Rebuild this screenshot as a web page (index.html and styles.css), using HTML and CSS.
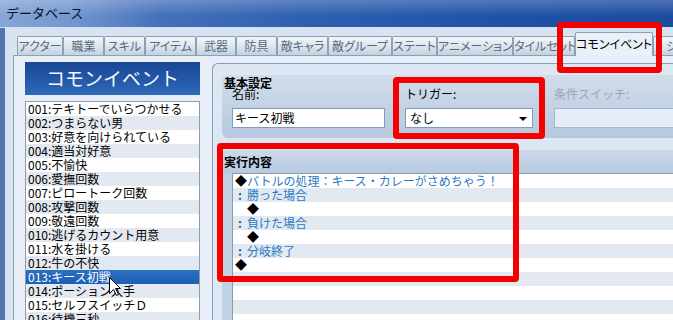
FILE: index.html
```html
<!DOCTYPE html>
<html lang="ja">
<head>
<meta charset="utf-8">
<title>データベース</title>
<link rel="stylesheet" href="styles.css">
</head>
<body>
<div class="window">
  <div class="titlebar"><span class="title">データベース</span></div>
  <div class="frame">
    <div class="tabs">
      <div class="tab">アクター</div>
      <div class="tab">職業</div>
      <div class="tab">スキル</div>
      <div class="tab">アイテム</div>
      <div class="tab">武器</div>
      <div class="tab">防具</div>
      <div class="tab">敵キャラ</div>
      <div class="tab">敵グループ</div>
      <div class="tab">ステート</div>
      <div class="tab">アニメーション</div>
      <div class="tab">タイルセット</div>
      <div class="tab active">コモンイベント</div>
      <div class="tab">システム</div>
    </div>
    <div class="panel">
      <div class="leftcol">
        <div class="lhead">コモンイベント</div>
        <div class="list">
          <div class="row">001:テキトーでいらつかせる</div>
          <div class="row">002:つまらない男</div>
          <div class="row">003:好意を向けられている</div>
          <div class="row">004:適当対好意</div>
          <div class="row">005:不愉快</div>
          <div class="row">006:愛撫回数</div>
          <div class="row">007:ピロートーク回数</div>
          <div class="row">008:攻撃回数</div>
          <div class="row">009:敬遠回数</div>
          <div class="row">010:逃げるカウント用意</div>
          <div class="row">011:水を掛ける</div>
          <div class="row">012:牛の不快</div>
          <div class="row sel">013:キース初戦</div>
          <div class="row">014:ポーション入手</div>
          <div class="row">015:セルフスイッチＤ</div>
          <div class="row">016:待機三秒</div>
        </div>
      </div>
      <div class="rightbox">
        <div class="group basic">
          <div class="gtitle">基本設定</div>
          <div class="fields">
            <div class="field name">
              <div class="flabel">名前:</div>
              <div class="input">キース初戦</div>
            </div>
            <div class="field trig">
              <div class="flabel">トリガー:</div>
              <div class="input combo"><span>なし</span><span class="arrow"></span></div>
            </div>
            <div class="field sw">
              <div class="flabel dim">条件スイッチ:</div>
              <div class="input dis"></div>
            </div>
          </div>
        </div>
        <div class="group exec">
          <div class="ghead">実行内容</div>
          <div class="gbody">
            <div class="exlist">
              <div class="exrow"><span class="dia">◆</span>バトルの処理：キース・カレーがさめちゃう！</div>
              <div class="exrow"><span class="colon">:</span>勝った場合</div>
              <div class="exrow ind"><span class="dia">◆</span></div>
              <div class="exrow"><span class="colon">:</span>負けた場合</div>
              <div class="exrow ind"><span class="dia">◆</span></div>
              <div class="exrow"><span class="colon">:</span>分岐終了</div>
              <div class="exrow"><span class="dia">◆</span></div>
              <div class="exrow"></div>
              <div class="exrow"></div>
              <div class="exrow"></div>
              <div class="exrow"></div>
              <div class="exrow"></div>
            </div>
          </div>
        </div>
      </div>
    </div>
  </div>
</div>

<div class="mark m-tab"></div>
<div class="mark m-trig"></div>
<div class="mark m-exec"></div>

<svg class="cursor" width="13" height="20" viewBox="0 0 13 20" xmlns="http://www.w3.org/2000/svg">
  <path d="M0.5 0.5 L0.5 16.5 L4.5 12.5 L7.5 18.5 L9.5 17.5 L6.5 11.5 L11.5 11.5 Z" fill="#fff" stroke="#000" stroke-width="1" stroke-linejoin="miter"/>
</svg>
</body>
</html>
```

FILE: styles.css
```css
* { box-sizing: border-box; }
html, body { margin: 0; padding: 0; }
body {
  width: 673px;
  height: 320px;
  overflow: hidden;
  position: relative;
  font-family: "Noto Sans CJK JP", "Noto Sans", sans-serif;
  font-size: 12px;
  color: #000;
  background: #d7e3f2;
}

.window {
  width: 673px;
  height: 320px;
  display: flex;
  flex-direction: column;
}

.titlebar {
  height: 28px;
  flex: none;
  display: flex;
  align-items: center;
  padding: 0 0 2px 6px;
  border-bottom: 1px solid #d3e0f1;
  background:
    linear-gradient(180deg, rgba(255,255,255,0.22) 0%, rgba(255,255,255,0.05) 45%, rgba(0,0,0,0) 60%),
    linear-gradient(90deg, #86a6d7 0px, #7597cf 70px, #4571bb 160px, #2f60b0 300px, #2253a7 480px, #1b4a9f 673px);
}
.title {
  font-size: 13px;
  line-height: 14px;
  color: #0a1322;
}

.frame {
  flex: 1;
  min-height: 0;
  display: flex;
  flex-direction: column;
  border-left: 5px solid #5275ad;
  padding-left: 8px;
  background: #d7e3f2;
}

.tabs {
  flex: none;
  height: 22px;
  margin-top: 5px;
  margin-left: 4px;
  display: flex;
  align-items: flex-end;
}
.tab {
  flex: none;
  height: 19px;
  border: 1px solid #8ea0b6;
  border-bottom: none;
  border-radius: 2px 2px 0 0;
  background: linear-gradient(180deg, #f2f6fa 0%, #dbe4ee 55%, #c3d1e1 100%);
  color: #5b6979;
  font-size: 12px;
  line-height: 18px;
  text-align: center;
  white-space: nowrap;
  overflow: hidden;
  font-feature-settings: "palt";
}
.tab:nth-child(1) { width: 46px; }
.tab:nth-child(2) { width: 41px; }
.tab:nth-child(3) { width: 41px; }
.tab:nth-child(4) { width: 51px; }
.tab:nth-child(5) { width: 40px; }
.tab:nth-child(6) { width: 41px; }
.tab:nth-child(7) { width: 51px; }
.tab:nth-child(8) { width: 64px; }
.tab:nth-child(9) { width: 45px; }
.tab:nth-child(10) { width: 76px; }
.tab:nth-child(11) { width: 62px; }
.tab:nth-child(12) { width: 78px; }
.tab:nth-child(13) { width: 70px; }
.tab.active {
  height: 24px;
  margin-bottom: -1px;
  background: #eaf0f8;
  color: #000;
  line-height: 21px;
  position: relative;
  z-index: 1;
}

.panel {
  flex: 1;
  min-height: 0;
  display: flex;
  gap: 12px;
  padding: 6px 0 0 11px;
  border-top: 1px solid #8ea0b6;
  border-left: 1px solid #8ea0b6;
  background: #e7eef7;
}

.leftcol {
  flex: none;
  width: 175px;
  display: flex;
  flex-direction: column;
  gap: 6px;
}
.lhead {
  flex: none;
  height: 33px;
  background: linear-gradient(180deg, #174794 0%, #2459a8 55%, #3069b9 100%);
  color: #f2f7ff;
  font-size: 19px;
  line-height: 32px;
  text-align: center;
}
.list {
  flex: 1;
  min-height: 0;
  overflow: hidden;
  background: #fff;
  border: 1px solid #8e9cb1;
  border-bottom: none;
}
.row {
  height: 14px;
  line-height: 14px;
  padding-left: 2px;
  white-space: nowrap;
}
.row:nth-child(even) { background: #e3e9f1; }
.row.sel {
  background: linear-gradient(180deg, #2c70c4 0%, #1a5fb4 100%);
  color: #fff;
}

.rightbox {
  flex: 1;
  min-width: 0;
  margin-top: 1px;
  display: flex;
  flex-direction: column;
  gap: 12px;
  padding: 11px 0 0 9px;
  border: 1px solid #8a9cb4;
  border-right: none;
  border-bottom: none;
  border-radius: 6px 0 0 0;
  background: #dde7f4;
}

.group.basic {
  flex: none;
  height: 63px;
  padding: 2px 0 0 2px;
  border-radius: 6px 0 0 6px;
  background: linear-gradient(180deg, #d0dcea 0%, #c3d3e5 50%, #b5c8dd 100%);
}
.gtitle {
  font-weight: bold;
  line-height: 12px;
}
.fields {
  display: flex;
  gap: 20px;
  padding-left: 8px;
  margin-top: -1px;
}
.field { flex: none; }
.field.name { width: 153px; }
.field.trig { width: 129px; }
.field.trig .input { width: 128px; }
.field.sw { width: 160px; }
.flabel {
  line-height: 12px;
  margin-bottom: 8px;
  white-space: nowrap;
}
.flabel.dim { color: #9ba6b4; }
.input {
  height: 20px;
  border: 1px solid #7f9cb9;
  background: #fff;
  line-height: 18px;
  padding-left: 2px;
  white-space: nowrap;
}
.combo {
  display: flex;
  align-items: center;
  justify-content: space-between;
  padding: 0 5px 0 4px;
}
.arrow {
  width: 0;
  height: 0;
  border-left: 4px solid transparent;
  border-right: 4px solid transparent;
  border-top: 4px solid #000;
  margin-top: 2px;
}
.input.dis {
  background: #e3ecf7;
  border-color: #a7b7cb;
}

.group.exec {
  flex: 1;
  min-height: 0;
  display: flex;
  flex-direction: column;
  border-radius: 6px 0 0 0;
  background: #c1d2e5;
}
.ghead {
  flex: none;
  height: 23px;
  line-height: 23px;
  padding-left: 2px;
  font-weight: bold;
  border-radius: 6px 0 0 0;
  background: linear-gradient(180deg, #ccd9e9 0%, #b8cadf 100%);
}
.gbody {
  flex: 1;
  min-height: 0;
  padding-left: 10px;
}
.exlist {
  height: 100%;
  overflow: hidden;
  background: #fff;
  border-top: 1px solid #8a9aae;
  border-left: 1px solid #8a9aae;
}
.exrow {
  height: 14px;
  line-height: 14px;
  padding-left: 2px;
  color: #2b7bc3;
  white-space: nowrap;
}
.exrow:nth-child(even) { background: #e3e9f1; }
.exrow.ind { padding-left: 14px; }
.dia { color: #000; }
.colon {
  display: inline-block;
  width: 12px;
  padding-left: 3px;
  color: #1d5b98;
  font-weight: bold;
}

.mark {
  position: absolute;
  border: 6px solid #f40000;
  border-radius: 4px;
  pointer-events: none;
}
.m-tab { left: 557px; top: 22px; width: 105px; height: 51px; }
.m-trig { left: 393px; top: 77px; width: 152px; height: 62px; }
.m-exec { left: 217px; top: 143px; width: 302px; height: 139px; }

.cursor {
  position: absolute;
  left: 109px;
  top: 277px;
}
```
